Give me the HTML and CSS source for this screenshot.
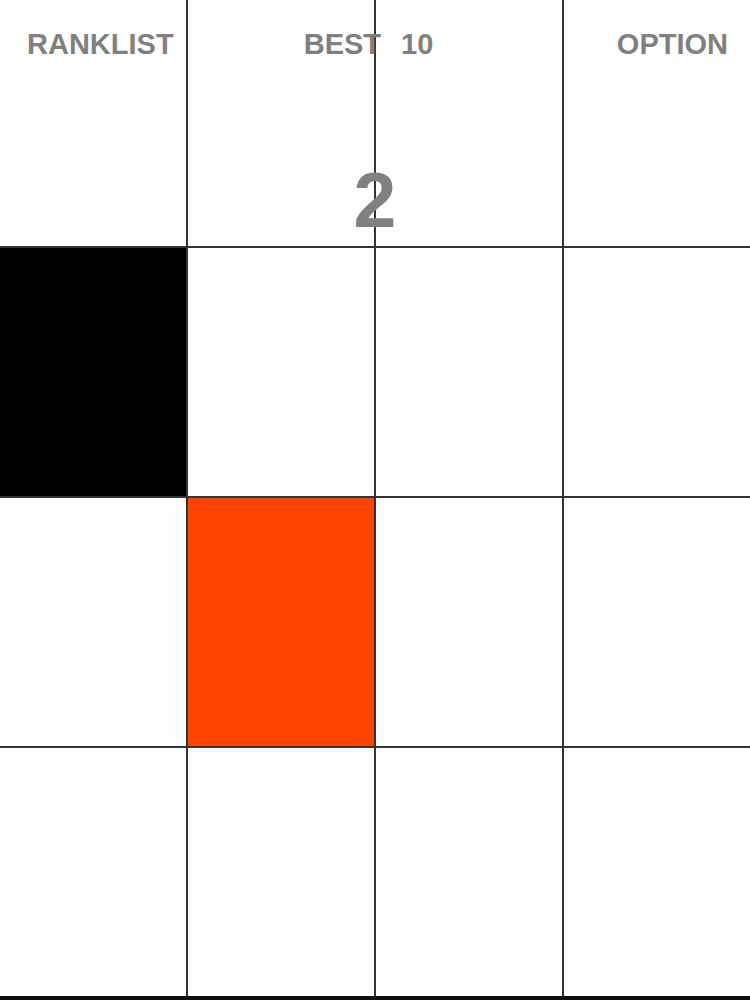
FILE: index.html
```html
<!DOCTYPE html>
<html>
<head>
<meta charset="utf-8">
<link rel="stylesheet" href="styles.css">
</head>
<body>
<div class="game">
  <div class="board">
    <div class="cell"></div><div class="cell"></div><div class="cell"></div><div class="cell"></div>
    <div class="cell black"></div><div class="cell"></div><div class="cell"></div><div class="cell"></div>
    <div class="cell"></div><div class="cell orange"></div><div class="cell"></div><div class="cell"></div>
    <div class="cell"></div><div class="cell"></div><div class="cell"></div><div class="cell"></div>
  </div>
  <div class="hud">
    <div class="menu">
      <span class="item left">RANKLIST</span>
      <span class="item mid">BEST<span class="best">10</span></span>
      <span class="item right">OPTION</span>
    </div>
    <div class="score">2</div>
  </div>
</div>
</body>
</html>
```
FILE: styles.css
```css
html, body {
  margin: 0;
  padding: 0;
  background: #fff;
}
.game {
  position: relative;
  width: 750px;
  height: 1000px;
  overflow: hidden;
  font-family: "Liberation Sans", Arial, sans-serif;
}
.board {
  display: grid;
  grid-template-columns: repeat(4, 1fr);
  grid-template-rows: 246px 248px 248px 248px;
  gap: 2px;
  background: #333;
  border-bottom: 4px solid #111;
}
.cell {
  background: #fff;
}
.cell.black {
  background: #020104;
}
.cell.orange {
  background: #ff4500;
}
.hud {
  position: absolute;
  top: 0;
  left: 0;
  right: 0;
  color: #808080;
  font-weight: bold;
}
.menu {
  display: grid;
  grid-template-columns: 1fr auto 1fr;
  padding: 30px 22px 0 27px;
  font-size: 29px;
  line-height: 28px;
}
.left { justify-self: start; }
.mid { justify-self: center; margin-right: 18px; }
.right { justify-self: end; }
.best { margin-left: 20px; }
.score {
  margin-top: 104px;
  text-align: center;
  font-size: 77px;
  line-height: 77px;
}
```
